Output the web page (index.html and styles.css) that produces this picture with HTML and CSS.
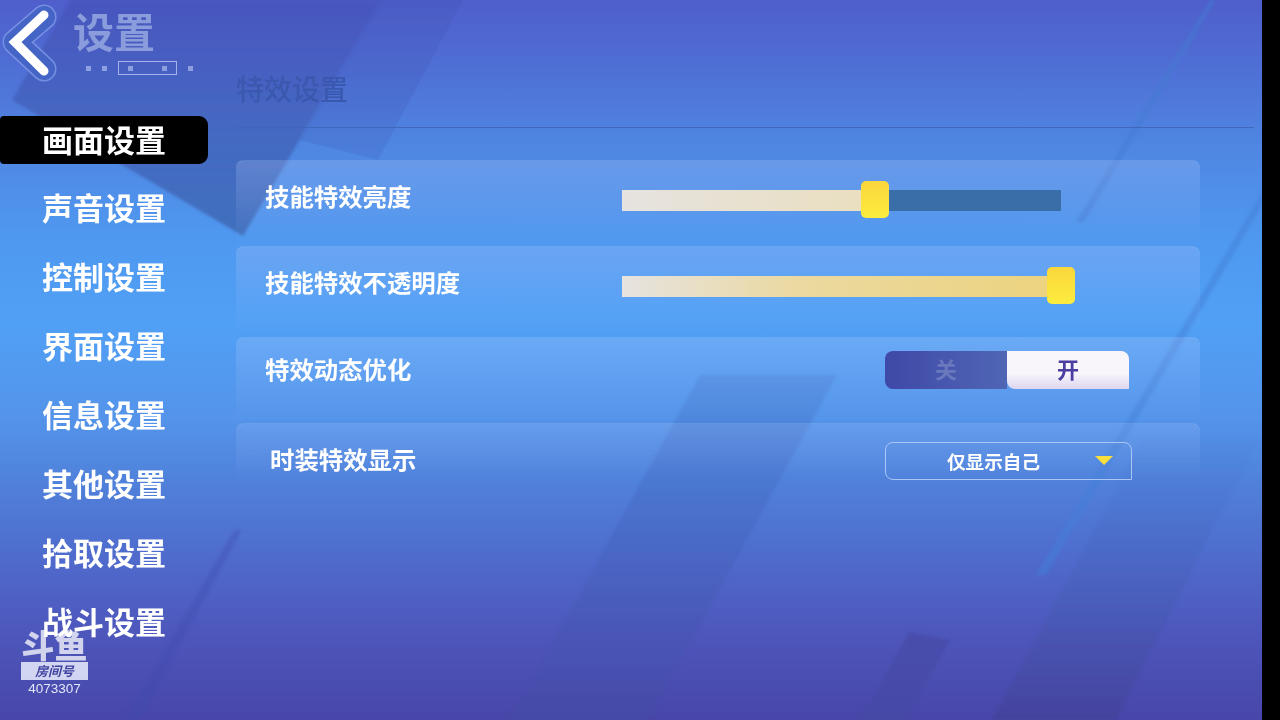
FILE: index.html
```html
<!DOCTYPE html>
<html lang="zh">
<head>
<meta charset="utf-8">
<title>设置</title>
<link rel="stylesheet" href="styles.css">
</head>
<body>
<div class="screen">
  <svg class="bg-art" viewBox="0 0 1262 720" preserveAspectRatio="none" aria-hidden="true">
    <defs>
      <linearGradient id="fadeDark" x1="0" y1="0" x2="0" y2="1">
        <stop offset="0" stop-color="#3f48ac" stop-opacity=".4"/>
        <stop offset="1" stop-color="#3a62ac" stop-opacity=".75"/>
      </linearGradient>
      <linearGradient id="band" x1="0" y1="0" x2="0" y2="1">
        <stop offset="0" stop-color="#4278cf" stop-opacity=".4"/>
        <stop offset="1" stop-color="#444aa6" stop-opacity=".5"/>
      </linearGradient>
      <linearGradient id="bandRight" x1="0" y1="0" x2="0" y2="1">
        <stop offset="0" stop-color="#4476d0" stop-opacity=".08"/>
        <stop offset=".5" stop-color="#4660b8" stop-opacity=".5"/>
        <stop offset="1" stop-color="#434099" stop-opacity=".7"/>
      </linearGradient>
      <filter id="soft"><feGaussianBlur stdDeviation="1.5"/></filter>
    </defs>
    <polygon points="382,0 463,0 378,160 300,140" fill="#3f4cab" fill-opacity=".18"/>
    <polygon points="70,0 382,0 243,236 12,100" fill="url(#fadeDark)" filter="url(#soft)"/>
    <polygon points="700,375 837,375 648,720 510,720" fill="url(#band)" filter="url(#soft)"/>
    <polygon points="909,632 950,640 905,720 861,720" fill="#464aa6" fill-opacity=".7" filter="url(#soft)"/>
    <polygon points="1143,440 1258,440 1116,720 992,720" fill="url(#bandRight)" filter="url(#soft)"/>
    <polygon points="1210,0 1216,0 1084,222 1076,222" fill="#3f7ad2" fill-opacity=".5" filter="url(#soft)"/>
    <polygon points="1262,192 1262,205 1046,575 1036,575" fill="#3f80d8" fill-opacity=".5" filter="url(#soft)"/>
    <polygon points="234,530 242,530 140,720 125,720" fill="#3f4aab" fill-opacity=".35" filter="url(#soft)"/>
  </svg>

  <aside class="sidebar">
    <header class="head">
      <svg class="back" viewBox="0 0 60 84" aria-hidden="true">
        <path d="M42 15 L13 40 L42 67" class="back-frame"/>
        <path d="M42 15 L13 40 L42 67" class="back-frame-inner"/>
        <path d="M42 13 L13 40 L42 69" class="back-arrow"/>
      </svg>
      <div class="head-text">
        <h1 class="head-title">设置</h1>
        <div class="pager">
          <i class="dot"></i><i class="dot"></i>
          <span class="pager-box"><i class="dot"></i><i class="dot"></i></span>
          <i class="dot"></i>
        </div>
      </div>
    </header>
    <nav class="nav">
      <a class="nav-item active">画面设置</a>
      <a class="nav-item">声音设置</a>
      <a class="nav-item">控制设置</a>
      <a class="nav-item">界面设置</a>
      <a class="nav-item">信息设置</a>
      <a class="nav-item">其他设置</a>
      <a class="nav-item">拾取设置</a>
      <a class="nav-item">战斗设置</a>
    </nav>
  </aside>

  <main class="panel">
    <h2 class="section-title">特效设置</h2>
    <div class="rows">
      <section class="row row-1">
        <span class="label">技能特效亮度</span>
        <div class="slider">
          <div class="fill fill-a"></div>
          <div class="thumb"></div>
        </div>
      </section>
      <section class="row row-2">
        <span class="label">技能特效不透明度</span>
        <div class="slider">
          <div class="fill fill-b"></div>
          <div class="thumb"></div>
        </div>
      </section>
      <section class="row row-3">
        <span class="label">特效动态优化</span>
        <div class="toggle">
          <span class="opt off">关</span>
          <span class="opt on">开</span>
        </div>
      </section>
      <section class="row row-4">
        <span class="label label-wide">时装特效显示</span>
        <div class="select">
          <span class="select-text">仅显示自己</span>
          <i class="caret"></i>
        </div>
      </section>
    </div>
  </main>

  <div class="watermark">
    <div class="wm-logo">斗鱼</div>
    <div class="wm-tag">房间号</div>
    <div class="wm-id">4073307</div>
  </div>
</div>
</body>
</html>
```

FILE: styles.css
```css
* { box-sizing: border-box; }
html, body { margin: 0; height: 100%; background: #000; overflow: hidden; }
body { font-family: "Noto Sans CJK SC", "Noto Sans", sans-serif; }

.screen {
  position: relative;
  width: 1262px;
  height: 720px;
  display: flex;
  overflow: hidden;
  filter: blur(.6px);
  background: linear-gradient(180deg, #4f5ecb 0%, #4f70d6 10%, #4f86e2 20%, #4f98f0 33%, #50a0f6 45%, #5494ea 58%, #5083dc 66%, #4f6ccd 77%, #4e58bd 87%, #4846a8 100%);
}
.bg-art { position: absolute; inset: 0; width: 100%; height: 100%; }

.sidebar { position: relative; width: 236px; flex: none; display: flex; flex-direction: column; }
.head { height: 107px; padding: 2px 0 0 2px; display: flex; gap: 11px; }
.back { width: 60px; height: 84px; flex: none; }
.back-frame { fill: none; stroke: #7f9ae8; stroke-width: 25; stroke-linecap: round; stroke-linejoin: round; stroke-opacity: .8; }
.back-frame-inner { fill: none; stroke: #4565c6; stroke-width: 22; stroke-linecap: round; stroke-linejoin: round; }
.back-arrow { fill: none; stroke: #fff; stroke-width: 9; stroke-linecap: round; stroke-linejoin: miter; }
.head-text { display: flex; flex-direction: column; }
.head-title {
  margin: 4px 0 0;
  font-size: 41px;
  line-height: 48px;
  font-weight: 700;
  color: #8b9cdc;
}
.pager { margin-top: 7px; padding-left: 13px; display: flex; align-items: center; gap: 11px; }
.dot { width: 5px; height: 5px; background: #8d9fe0; display: block; }
.pager-box {
  width: 59px; height: 14px;
  display: flex; align-items: center; justify-content: space-between;
  padding: 0 9px;
  border: 1px solid #a6b3ea;
}

.nav { display: flex; flex-direction: column; }
.nav-item {
  height: 69px;
  padding: 0 0 4px 42px;
  display: flex; align-items: center;
  font-size: 31px;
  font-weight: 700;
  color: #fff;
  white-space: nowrap;
}
.nav-item.active {
  width: 208px;
  height: 48px;
  margin: 9px 0 10px;
  background: #000;
  border-radius: 4px 9px 9px 4px;
}

.panel { position: relative; flex: 1; display: flex; flex-direction: column; }
.section-title {
  height: 128px;
  margin: 0 8px 0 0;
  padding: 69px 0 0;
  font-size: 28px;
  line-height: 38px;
  font-weight: 500;
  color: #3a58ae;
  border-bottom: 1px solid #3f68bc;
}
.rows { margin-top: 32px; width: 964px; display: flex; flex-direction: column; gap: 1px; }
.row {
  position: relative;
  display: flex; align-items: center;
  padding-left: 29px;
  border-radius: 8px 8px 0 0;
  background: linear-gradient(180deg, rgba(190,205,250,.24), rgba(130,185,250,.01));
  border-top: 1px solid rgba(190,215,250,.2);
}
.row-1 { height: 85px; padding-bottom: 15px; }
.row-2 { height: 90px; padding-bottom: 20px; }
.row-3 { height: 85px; padding-bottom: 22px; }
.row-4 { height: 57px; padding-top: 14px; background: linear-gradient(180deg, rgba(190,205,250,.18), rgba(130,170,240,.01)); }

.label { font-size: 24.4px; line-height: 32px; font-weight: 700; color: #fff; white-space: nowrap; }
.label-wide { margin-left: 5px; }

.slider { position: absolute; left: 386px; top: 29px; width: 439px; height: 21px; background: #3a6ea8; }
.fill { height: 100%; }
.fill-a { width: 55%; background: linear-gradient(90deg, #e6e3e0, #eadfc0); }
.fill-b { width: 100%; background: linear-gradient(90deg, #e6e3e0 0%, #ebd9a0 40%, #ecd37e 100%); }
.thumb {
  position: absolute; top: -9px; width: 28px; height: 37px;
  left: 239px;
  border-radius: 5px;
  background: linear-gradient(180deg, #fad63c, #fdec3e);
}
.row-2 .thumb { left: 425px; }

.toggle { position: absolute; left: 649px; top: 13px; width: 244px; height: 38px; display: flex; }
.opt { display: flex; align-items: center; justify-content: center; padding-bottom: 4px; font-size: 22px; font-weight: 700; }
.off { width: 122px; color: #6a78bd; background: linear-gradient(90deg, #3f49a8, #5065b4); border-radius: 8px 0 0 8px; }
.on { width: 122px; color: #4a3fa0; background: linear-gradient(180deg, #f8f5fb 60%, #dcd6f0); border-radius: 0 8px 0 8px; }

.select {
  position: absolute; left: 649px; top: 18px; width: 247px; height: 38px;
  display: flex; align-items: center;
  border: 1.5px solid #a9c6f5;
  border-radius: 8px 8px 0 8px;
}
.select-text { position: absolute; left: 61px; padding-bottom: 2px; font-size: 18.6px; font-weight: 700; color: #fff; white-space: nowrap; }
.caret {
  position: absolute; right: 18px; top: 13px;
  border-left: 9px solid transparent; border-right: 9px solid transparent;
  border-top: 9px solid #fbe03c;
}

.watermark { position: absolute; left: 21px; top: 626px; width: 67px; display: flex; flex-direction: column; align-items: center; }
.wm-logo {
  width: 67px; height: 36px;
  font-size: 33px; line-height: 36px; font-weight: 900;
  color: rgba(255,255,255,.75);
  text-align: center;
  white-space: nowrap;
}
.wm-tag {
  width: 67px; height: 18px;
  background: rgba(225,228,248,.9);
  color: #3f429f;
  font-size: 13px; line-height: 18px; font-style: italic; font-weight: 700; text-align: center;
}
.wm-id { margin-top: 1px; font-family: "Liberation Sans", sans-serif; font-size: 13.5px; line-height: 16px; color: #e2e6fa; }
```
